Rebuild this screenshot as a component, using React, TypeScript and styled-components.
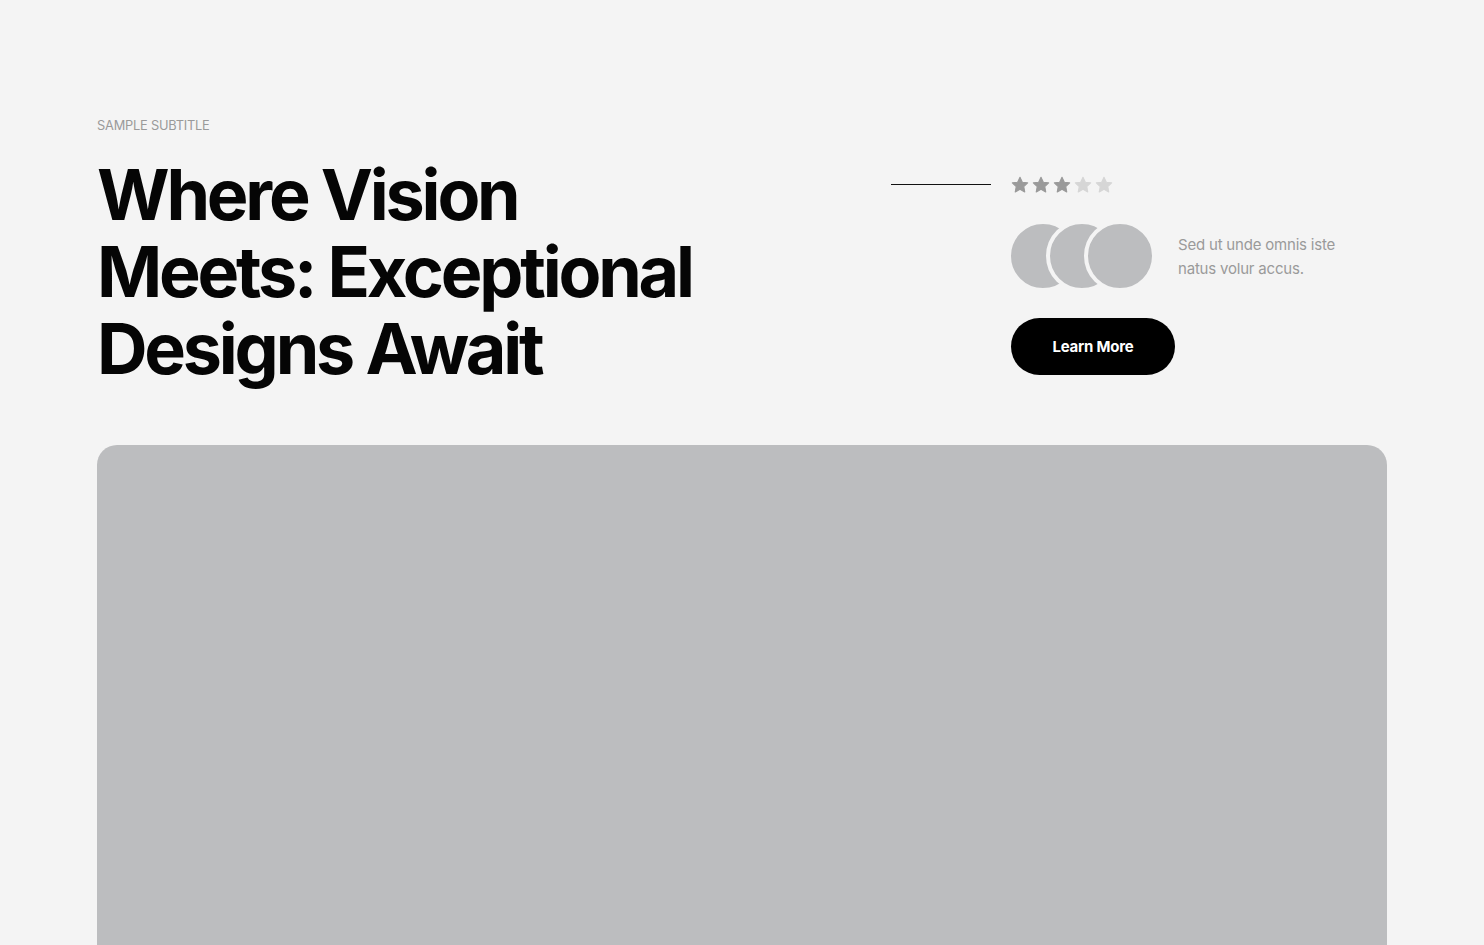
import React from "react";
import styled, { createGlobalStyle } from "styled-components";

const Global = createGlobalStyle`
  html, body { margin: 0; padding: 0; background: #f4f4f4; }
  body { font-family: Inter, "Noto Sans", sans-serif; overflow: hidden; }
`;

const Page = styled.main`
  width: 1290px;
  margin: 0 auto;
  padding-top: 118px;
  box-sizing: border-box;
`;

const Hero = styled.section`
  display: flex;
  justify-content: space-between;
  align-items: flex-start;
`;

const Left = styled.div`
  display: flex;
  flex-direction: column;
`;

const Subtitle = styled.span`
  font-size: 12.8px;
  line-height: 16px;
  color: #9a9a9a;
  text-transform: uppercase;
  letter-spacing: -0.2px;
`;

const Heading = styled.h1`
  margin: 22px 0 0;
  font-size: 70px;
  line-height: 77px;
  font-weight: 700;
  letter-spacing: -3.2px;
  color: #050505;
`;

const Right = styled.div`
  display: flex;
  align-items: flex-start;
  gap: 20px;
  width: 496px;
  padding-top: 58px;
`;

const Rule = styled.div`
  width: 100px;
  height: 1px;
  background: #111;
  margin-top: 8px;
`;

const Info = styled.div`
  display: flex;
  flex-direction: column;
  align-items: flex-start;
`;

const Stars = styled.div`
  display: flex;
  gap: 3px;
`;

const Row = styled.div`
  display: flex;
  align-items: center;
  margin-top: 26px;
  margin-left: -4px;
`;

const Avatar = styled.div`
  width: 64px;
  height: 64px;
  border-radius: 50%;
  background: #bcbdbf;
  border: 4px solid #f4f4f4;
  & + & { margin-left: -33.5px; }
`;

const Blurb = styled.p`
  margin: 2px 0 0 22px;
  width: 175px;
  font-size: 15px;
  line-height: 24px;
  color: #9a9a9a;
  letter-spacing: -0.2px;
`;

const Button = styled.button`
  margin-top: 26px;
  width: 164px;
  height: 57px;
  border: none;
  border-radius: 29px;
  background: #000;
  color: #fff;
  font-family: Inter, sans-serif;
  font-size: 15px;
  font-weight: 700;
  letter-spacing: -0.2px;
  cursor: pointer;
`;

const Media = styled.div`
  margin-top: 58px;
  height: 600px;
  border-radius: 20px;
  background: #bcbdbf;
`;

const Star = ({ filled }: { filled: boolean }) => (
  <svg width="18" height="18" viewBox="0 0 24 24">
    <path
      d="M12 1.8l3.1 6.5 7.1.9-5.2 4.9 1.3 7.1L12 17.8l-6.3 3.4 1.3-7.1-5.2-4.9 7.1-.9z"
      fill={filled ? "#9a9a9a" : "#d6d6d6"}
      stroke={filled ? "#9a9a9a" : "#d6d6d6"}
      strokeLinejoin="round"
      strokeWidth="1.5"
    />
  </svg>
);

export default function App() {
  return (
    <>
      <Global />
      <Page>
        <Hero>
          <Left>
            <Subtitle>Sample Subtitle</Subtitle>
            <Heading>
              Where Vision
              <br />
              Meets: Exceptional
              <br />
              Designs Await
            </Heading>
          </Left>
          <Right>
            <Rule />
            <Info>
              <Stars>
                {[0, 1, 2, 3, 4].map((i) => (
                  <Star key={i} filled={i < 3} />
                ))}
              </Stars>
              <Row>
                <Avatar />
                <Avatar />
                <Avatar />
                <Blurb>Sed ut unde omnis iste natus volur accus.</Blurb>
              </Row>
              <Button>Learn More</Button>
            </Info>
          </Right>
        </Hero>
        <Media />
      </Page>
    </>
  );
}
